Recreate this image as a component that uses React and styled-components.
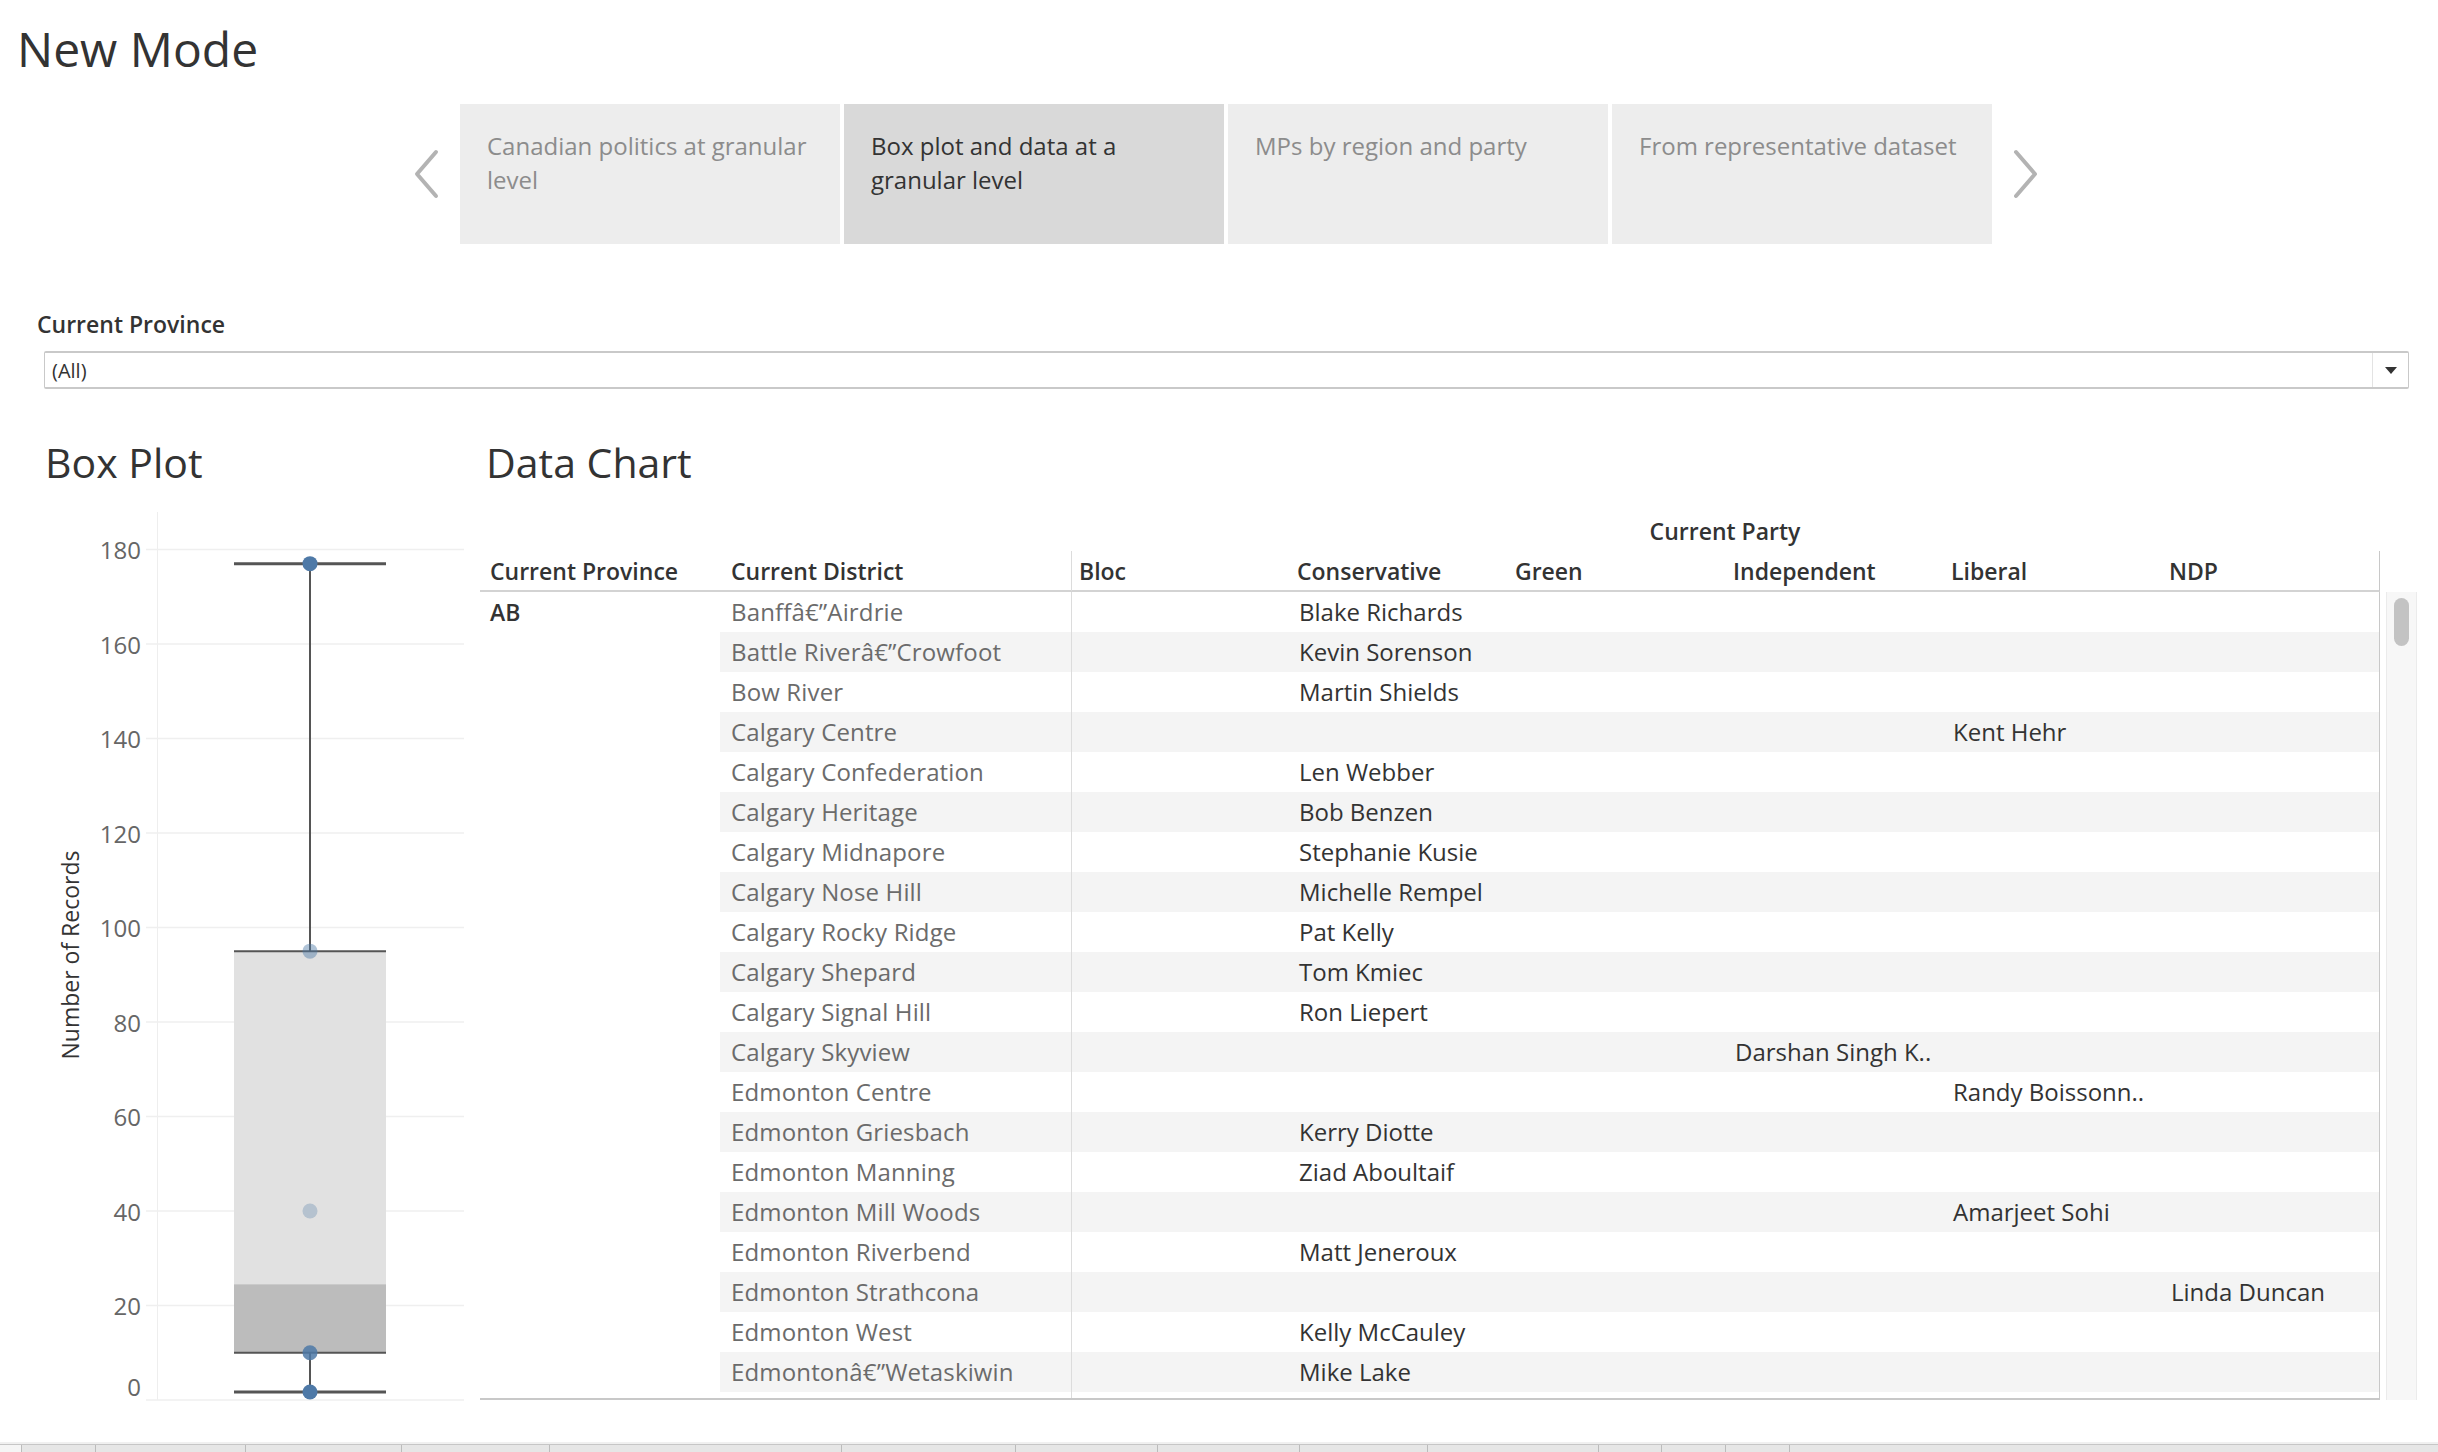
import React from "react";
import styled, { createGlobalStyle } from "styled-components";

const GlobalStyle = createGlobalStyle`
  * { box-sizing: border-box; }
  html, body { margin: 0; padding: 0; background: #fff; }
  body {
    font-family: "Open Sans", "Noto Sans", "Liberation Sans", sans-serif;
    color: #333;
  }
`;

const D = "\u00e2\u20ac\u201d";

const PARTIES = ["Bloc", "Conservative", "Green", "Independent", "Liberal", "NDP"];

const rows = [
  ["Banff" + D + "Airdrie", "Conservative", "Blake Richards"],
  ["Battle River" + D + "Crowfoot", "Conservative", "Kevin Sorenson"],
  ["Bow River", "Conservative", "Martin Shields"],
  ["Calgary Centre", "Liberal", "Kent Hehr"],
  ["Calgary Confederation", "Conservative", "Len Webber"],
  ["Calgary Heritage", "Conservative", "Bob Benzen"],
  ["Calgary Midnapore", "Conservative", "Stephanie Kusie"],
  ["Calgary Nose Hill", "Conservative", "Michelle Rempel"],
  ["Calgary Rocky Ridge", "Conservative", "Pat Kelly"],
  ["Calgary Shepard", "Conservative", "Tom Kmiec"],
  ["Calgary Signal Hill", "Conservative", "Ron Liepert"],
  ["Calgary Skyview", "Independent", "Darshan Singh K.."],
  ["Edmonton Centre", "Liberal", "Randy Boissonn.."],
  ["Edmonton Griesbach", "Conservative", "Kerry Diotte"],
  ["Edmonton Manning", "Conservative", "Ziad Aboultaif"],
  ["Edmonton Mill Woods", "Liberal", "Amarjeet Sohi"],
  ["Edmonton Riverbend", "Conservative", "Matt Jeneroux"],
  ["Edmonton Strathcona", "NDP", "Linda Duncan"],
  ["Edmonton West", "Conservative", "Kelly McCauley"],
  ["Edmonton" + D + "Wetaskiwin", "Conservative", "Mike Lake"],
  ["", "", ""],
];

const stories = [
  "Canadian politics at granular level",
  "Box plot and data at a granular level",
  "MPs by region and party",
  "From representative dataset",
];

const sheetTabs = [22, 74, 150, 156, 148, 292, 174, 142, 142, 128, 171, 63, 64, 64];

const COLS = "240px 351px repeat(6, 218px)";

// value -> svg y (svg top sits at page y 490)
const yOf = (v) => 910 - v * 4.725;

function BoxPlotChart() {
  const ticks = [0, 20, 40, 60, 80, 100, 120, 140, 160, 180];
  const cx = 310;
  const top = yOf(177);
  const q3 = yOf(95);
  const med = yOf(24.5);
  const q1 = yOf(10);
  const low = yOf(1.7);
  return (
    <ChartSvg width="480" height="920" viewBox="0 0 480 920">
      <line x1="157.5" y1="22" x2="157.5" y2="910" stroke="#eeeeee" strokeWidth="1" />
      {ticks.map((t) => (
        <g key={t}>
          <line x1="146" y1={yOf(t)} x2="464" y2={yOf(t)} stroke="#efefef" strokeWidth="1.5" />
          <text
            x="141"
            y={t === 0 ? yOf(t) - 14 : yOf(t)}
            textAnchor="end"
            dominantBaseline="central"
            fontSize="24"
            fill="#666"
          >
            {t}
          </text>
        </g>
      ))}
      <text
        x="70"
        y="465"
        textAnchor="middle"
        dominantBaseline="central"
        fontSize="23"
        fill="#333"
        transform="rotate(-90 70 465)"
      >
        Number of Records
      </text>
      <rect x="234" y={q3} width="152" height={med - q3} fill="#e1e1e1" />
      <rect x="234" y={med} width="152" height={q1 - med} fill="#bcbcbc" />
      <line x1={cx} y1={top} x2={cx} y2={q3} stroke="#555" strokeWidth="2" />
      <line x1={cx} y1={q1} x2={cx} y2={low} stroke="#555" strokeWidth="2" />
      <line x1="234" y1={top} x2="386" y2={top} stroke="#555" strokeWidth="3" />
      <line x1="234" y1={q3} x2="386" y2={q3} stroke="#555" strokeWidth="2" />
      <line x1="234" y1={q1} x2="386" y2={q1} stroke="#555" strokeWidth="2" />
      <line x1="234" y1={low} x2="386" y2={low} stroke="#555" strokeWidth="3" />
      <circle cx={cx} cy={top} r="7.5" fill="#4e79a7" />
      <circle cx={cx} cy={q3} r="7.5" fill="#4e79a7" opacity="0.45" />
      <circle cx={cx} cy={yOf(40)} r="7.5" fill="#4e79a7" opacity="0.3" />
      <circle cx={cx} cy={q1} r="7.5" fill="#4e79a7" opacity="0.85" />
      <circle cx={cx} cy={low} r="7.5" fill="#4e79a7" />
    </ChartSvg>
  );
}

function Chevron({ dir }) {
  const pts = dir === "left" ? "24,3 5,25 24,47" : "4,3 23,25 4,47";
  return (
    <svg width="28" height="50" viewBox="0 0 28 50">
      <polyline
        points={pts}
        fill="none"
        stroke="#b3b3b3"
        strokeWidth="4"
        strokeLinecap="round"
        strokeLinejoin="round"
      />
    </svg>
  );
}

export default function App() {
  return (
    <Page>
      <GlobalStyle />
      <Title>New Mode</Title>

      <StoryNav>
        <Arrow $side="left">
          <Chevron dir="left" />
        </Arrow>
        {stories.map((s, i) => (
          <StoryTab key={s} $active={i === 1}>
            {s}
          </StoryTab>
        ))}
        <Arrow $side="right">
          <Chevron dir="right" />
        </Arrow>
      </StoryNav>

      <Filter>
        <FilterLabel>Current Province</FilterLabel>
        <Dropdown>
          <DropValue>(All)</DropValue>
          <DropButton>
            <Caret />
          </DropButton>
        </Dropdown>
      </Filter>

      <Dashboard>
        <BoxPanel>
          <PanelTitle $indent={45}>Box Plot</PanelTitle>
          <BoxPlotChart />
        </BoxPanel>

        <DataPanel>
          <PanelTitle $indent={6}>Data Chart</PanelTitle>
          <TableWrap>
            <PartyRow>
              <span />
              <PartyLabel>Current Party</PartyLabel>
            </PartyRow>
            <HeaderRow>
              <HeaderCell $pad={10}>Current Province</HeaderCell>
              <HeaderCell $pad={11}>Current District</HeaderCell>
              {PARTIES.map((p, i) => (
                <HeaderCell key={p} $pad={i === 0 ? 7 : 8} $divider={i === 0}>
                  {p}
                </HeaderCell>
              ))}
            </HeaderRow>
            <BodyWrap>
              <Body>
                {rows.map(([district, party, name], r) => {
                  const striped = r % 2 === 1;
                  return (
                    <Row key={r}>
                      <ProvinceCell>{r === 0 ? "AB" : ""}</ProvinceCell>
                      <DistrictCell $striped={striped}>{district}</DistrictCell>
                      {PARTIES.map((p, i) => (
                        <Cell key={p} $striped={striped} $divider={i === 0}>
                          {party === p ? name : ""}
                        </Cell>
                      ))}
                    </Row>
                  );
                })}
              </Body>
              <Scrollbar>
                <Thumb />
              </Scrollbar>
            </BodyWrap>
          </TableWrap>
        </DataPanel>
      </Dashboard>

      <SheetBar>
        {sheetTabs.map((w, i) => (
          <SheetTab key={i} $first={i === 0} style={{ width: w }} />
        ))}
        <SheetRest />
      </SheetBar>
    </Page>
  );
}

const Page = styled.div`
  display: flex;
  flex-direction: column;
  height: 100vh;
  min-height: 1452px;
  overflow: hidden;
`;

const Title = styled.h1`
  margin: 18px 0 0 17px;
  font-size: 48px;
  font-weight: 400;
  line-height: 62px;
  color: #333;
`;

const StoryNav = styled.nav`
  display: flex;
  align-items: center;
  gap: 4px;
  margin-top: 24px;
  padding-left: 412px;
`;

const Arrow = styled.div`
  display: flex;
  width: 28px;
  height: 50px;
  margin-right: ${(p) => (p.$side === "left" ? "16px" : "0")};
  margin-left: ${(p) => (p.$side === "right" ? "16px" : "0")};
  cursor: pointer;
`;

const StoryTab = styled.div`
  width: 380px;
  height: 140px;
  padding: 25px 24px 0 27px;
  background: ${(p) => (p.$active ? "#d9d9d9" : "#ededed")};
  color: ${(p) => (p.$active ? "#333" : "#8c8c8c")};
  font-size: 24px;
  line-height: 34px;
  cursor: pointer;
`;

const Filter = styled.section`
  margin-top: 64px;
`;

const FilterLabel = styled.div`
  padding-left: 37px;
  font-size: 23px;
  font-weight: 600;
  line-height: 32px;
  color: #333;
`;

const Dropdown = styled.div`
  display: flex;
  align-items: center;
  height: 38px;
  margin: 11px 29px 0 44px;
  border: 1px solid #c9c9c9;
  border-top-width: 2px;
  border-bottom-width: 2px;
  border-radius: 2px;
`;

const DropValue = styled.span`
  flex: 1;
  padding-left: 7px;
  font-size: 20px;
  color: #333;
`;

const DropButton = styled.span`
  display: flex;
  align-items: center;
  justify-content: center;
  width: 36px;
  height: 100%;
  border-left: 1px solid #e3e3e3;
`;

const Caret = styled.span`
  width: 0;
  height: 0;
  border-left: 6px solid transparent;
  border-right: 6px solid transparent;
  border-top: 7px solid #333;
`;

const Dashboard = styled.div`
  display: flex;
  margin-top: 45px;
`;

const BoxPanel = styled.div`
  width: 480px;
  flex-shrink: 0;
`;

const PanelTitle = styled.h2`
  margin: 0;
  padding-left: ${(p) => p.$indent}px;
  font-size: 41px;
  font-weight: 400;
  line-height: 56px;
  color: #333;
`;

const ChartSvg = styled.svg`
  display: block;
  font-family: "Open Sans", "Noto Sans", sans-serif;
`;

const DataPanel = styled.div`
  width: 1937px;
  flex-shrink: 0;
`;

const TableWrap = styled.div`
  margin-top: 21px;
`;

const PartyRow = styled.div`
  display: grid;
  grid-template-columns: 591px 1308px;
  height: 40px;
  align-items: center;
`;

const PartyLabel = styled.div`
  text-align: center;
  font-size: 23px;
  font-weight: 600;
  color: #333;
`;

const HeaderRow = styled.div`
  display: grid;
  grid-template-columns: ${COLS};
  width: 1900px;
  height: 41px;
  border-bottom: 2px solid #d3d3d3;
  border-right: 1px solid #c8c8c8;
`;

const HeaderCell = styled.div`
  padding-left: ${(p) => p.$pad}px;
  font-size: 23px;
  font-weight: 600;
  line-height: 40px;
  color: #333;
  white-space: nowrap;
  border-left: ${(p) => (p.$divider ? "1px solid #dcdcdc" : "none")};
`;

const BodyWrap = styled.div`
  display: flex;
  height: 808px;
`;

const Body = styled.div`
  width: 1900px;
  height: 808px;
  overflow: hidden;
  border-right: 1px solid #c8c8c8;
  border-bottom: 2px solid #c8c8c8;
`;

const Row = styled.div`
  display: grid;
  grid-template-columns: ${COLS};
  height: 40px;
`;

const BaseCell = styled.div`
  font-size: 24px;
  line-height: 40px;
  white-space: nowrap;
  overflow: hidden;
`;

const ProvinceCell = styled(BaseCell)`
  padding-left: 10px;
  font-size: 23px;
  font-weight: 600;
  color: #333;
  background: #fff;
`;

const DistrictCell = styled(BaseCell)`
  padding-left: 11px;
  color: #6b6b6b;
  letter-spacing: 0.15px;
  background: ${(p) => (p.$striped ? "#f4f4f4" : "#fff")};
`;

const Cell = styled(BaseCell)`
  padding-left: ${(p) => (p.$divider ? "9px" : "10px")};
  color: #333;
  background: ${(p) => (p.$striped ? "#f4f4f4" : "#fff")};
  border-left: ${(p) => (p.$divider ? "1px solid #dcdcdc" : "none")};
`;

const Scrollbar = styled.div`
  width: 31px;
  height: 808px;
  margin-left: 6px;
  padding: 6px 0 0 7px;
  background: #f7f7f7;
  border-left: 1px solid #ebebeb;
  border-right: 1px solid #ebebeb;
`;

const Thumb = styled.div`
  width: 15px;
  height: 48px;
  border-radius: 8px;
  background: #c3c3c3;
`;

const SheetBar = styled.div`
  display: flex;
  margin-top: auto;
  height: 10px;
  border-top: 2px solid #f0f0f0;
  box-shadow: inset 0 1px 0 #c6c6c6;
  padding-top: 1px;
  background: #e6e6e6;
`;

const SheetTab = styled.div`
  flex-shrink: 0;
  height: 100%;
  background: ${(p) => (p.$first ? "#f5f5f5" : "#e6e6e6")};
  border-right: 1px solid #bcbcbc;
`;

const SheetRest = styled.div`
  flex: 1;
`;
